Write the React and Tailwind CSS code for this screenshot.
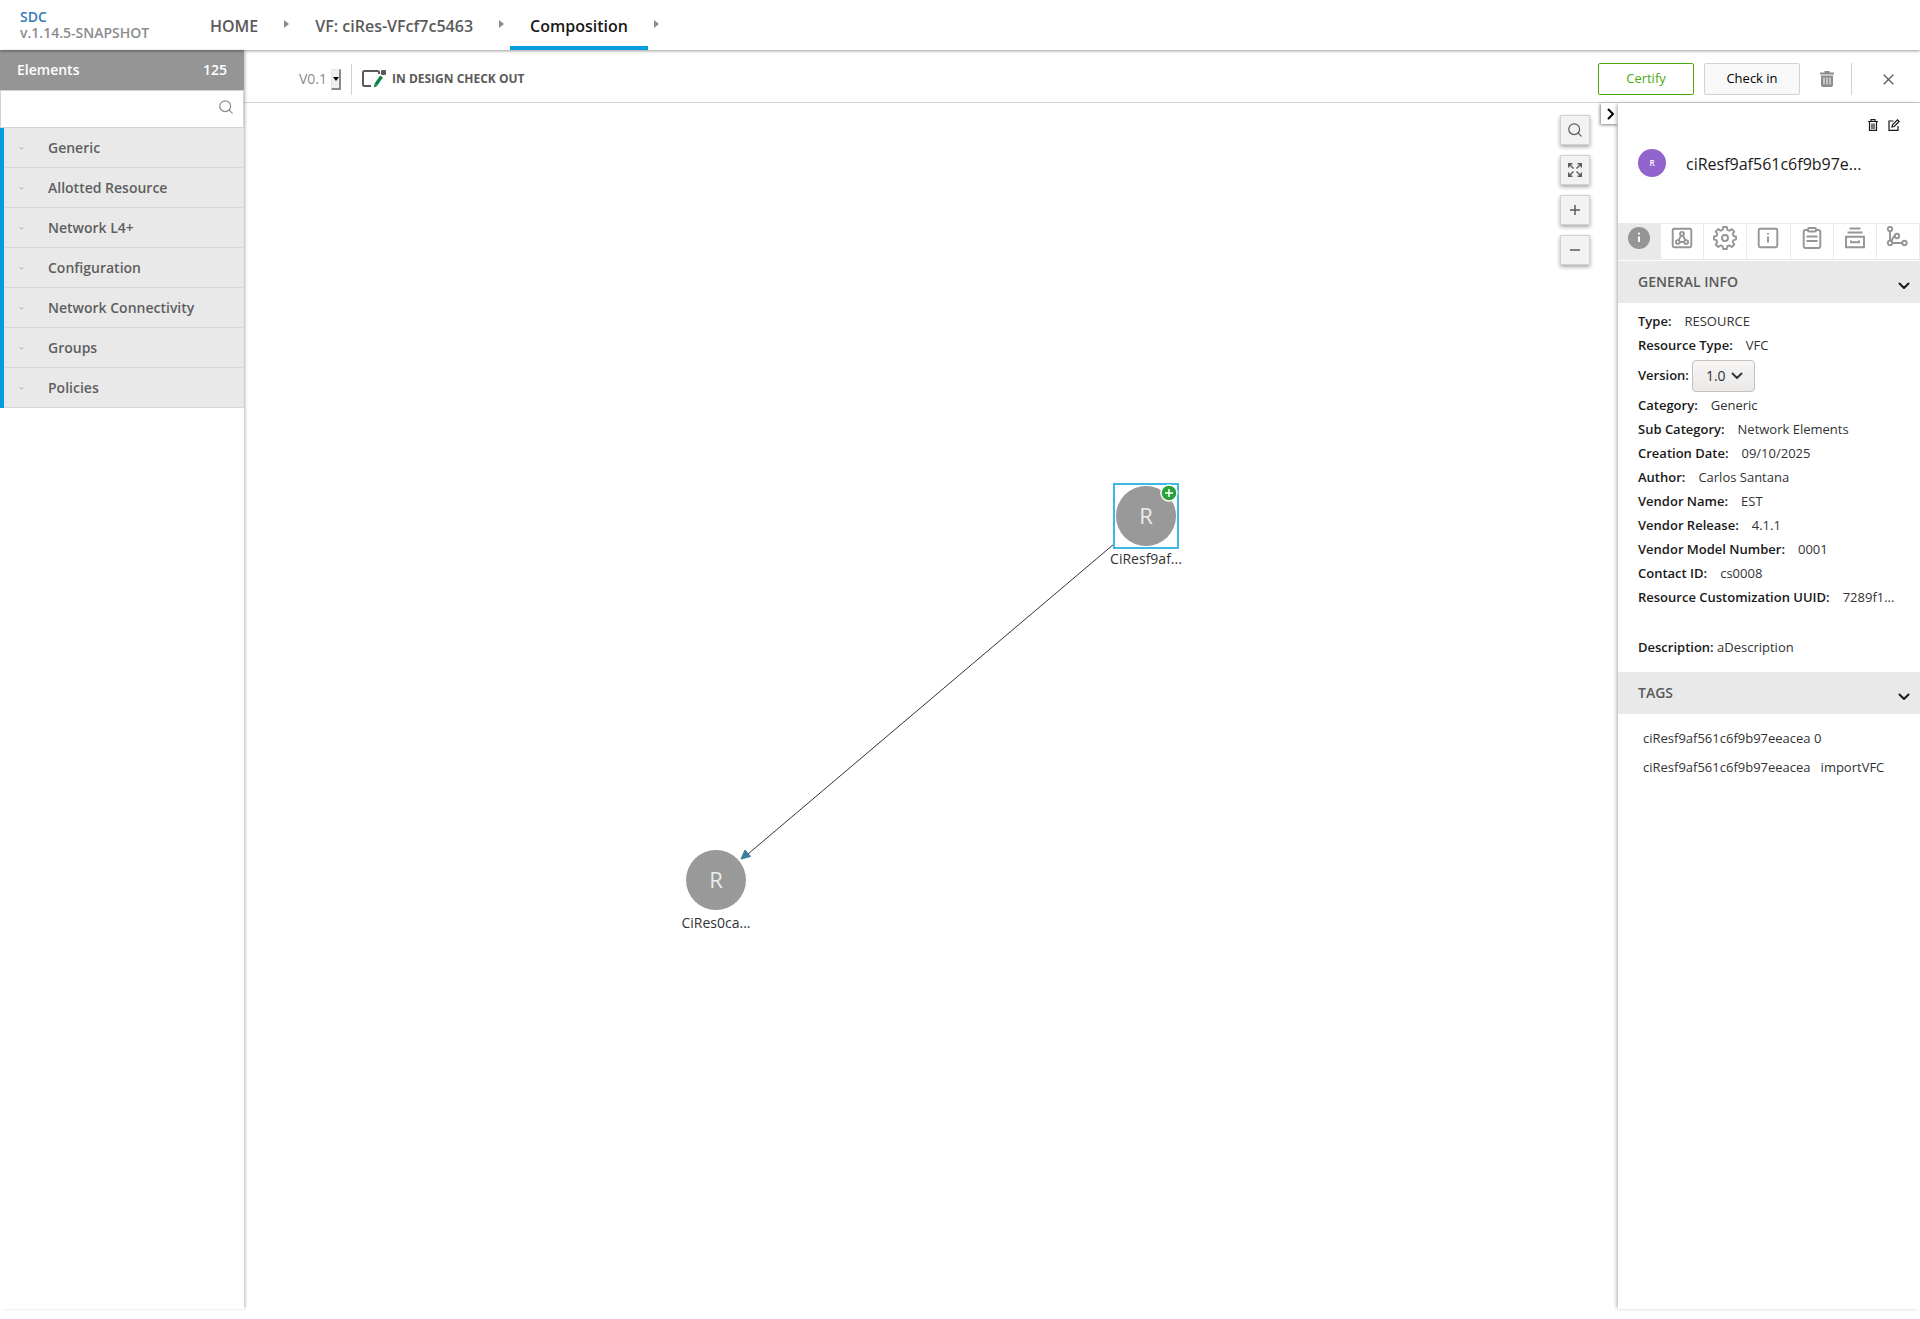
import React, { useState } from "react";

const categories = [
  "Generic",
  "Allotted Resource",
  "Network L4+",
  "Configuration",
  "Network Connectivity",
  "Groups",
  "Policies",
];

const details = [
  ["Category", "Generic"],
  ["Sub Category", "Network Elements"],
  ["Creation Date", "09/10/2025"],
  ["Author", "Carlos Santana"],
  ["Vendor Name", "EST"],
  ["Vendor Release", "4.1.1"],
  ["Vendor Model Number", "0001"],
  ["Contact ID", "cs0008"],
  ["Resource Customization UUID", "7289f1..."],
];

const SearchIcon = ({ className }) => (
  <svg viewBox="0 0 14 14" className={className} fill="none" stroke="currentColor" strokeWidth="1.2" strokeLinecap="round">
    <circle cx="6.2" cy="6.2" r="5.4" />
    <path d="M10.2 10.2l3 3" />
  </svg>
);

const Chevron = ({ className }) => (
  <svg viewBox="0 0 12 8" className={className} fill="none" stroke="currentColor" strokeWidth="2" strokeLinecap="round" strokeLinejoin="round">
    <path d="M1.5 1.5L6 6l4.500-4.500" />
  </svg>
);

const Crumb = ({ active, children }) => (
  <li className="flex h-full items-center">
    <a
      href="#"
      className={
        active
          ? "flex h-full items-center border-b-4 border-[#009fdb] px-5 pt-1.5 font-semibold text-[#191919]"
          : "flex h-full items-center border-b-4 border-transparent px-5 pt-1.5 font-semibold text-[#5a5a5a]"
      }
    >
      {children}
    </a>
    <svg viewBox="0 0 5 8" className="mx-1.5 mb-0.5 h-2 w-[5px] fill-[#8c8c8c]">
      <path d="M0 0l5 4-5 4z" />
    </svg>
  </li>
);

const tabs = [
  {
    name: "General information",
    icon: (
      <>
        <circle cx="12" cy="12" r="11" fill="currentColor" stroke="none" />
        <path d="M12 10.500v5.500" stroke="#fff" />
        <circle cx="12" cy="7.600" r="1.100" fill="#fff" stroke="none" />
      </>
    ),
  },
  {
    name: "Composition",
    icon: (
      <>
        <rect x="2.700" y="2.700" width="18.600" height="18.600" rx="1.500" />
        <circle cx="12" cy="7.800" r="1.900" />
        <circle cx="7.800" cy="16" r="1.900" />
        <circle cx="16.200" cy="16" r="1.900" />
        <path d="M11.100 9.500l-2.500 4.700M12.900 9.500l2.500 4.700M9.700 16h4.600" />
      </>
    ),
  },
  {
    name: "Properties",
    icon: (
      <>
        <circle cx="12" cy="12" r="3" />
        <path d="M10.2 1h3.600l.6 2.900 1.900.8 2.500-1.600 2.500 2.500-1.600 2.500.8 1.900 2.500.5v3.100l-2.500.5-.8 1.900 1.600 2.500-2.500 2.500-2.500-1.600-1.900.8-.6 2.800h-3.600l-.6-2.800-1.900-.8-2.500 1.600-2.500-2.500 1.600-2.500-.8-1.900-2.500-.5v-3.100l2.500-.5.8-1.900-1.600-2.500 2.500-2.500 2.500 1.600 1.900-.8z" strokeLinejoin="round" />
      </>
    ),
  },
  {
    name: "Information artifacts",
    icon: (
      <>
        <rect x="2.700" y="2.700" width="18.600" height="18.600" rx="1.500" />
        <path d="M12 10.500v6M12 7v1.600" />
      </>
    ),
  },
  {
    name: "Deployment artifacts",
    icon: (
      <>
        <path d="M8 4H5.500A1.800 1.800 0 0 0 3.700 5.800v14.400A1.800 1.800 0 0 0 5.500 22h13a1.800 1.800 0 0 0 1.800-1.800V5.800A1.800 1.800 0 0 0 18.500 4H16" />
        <rect x="8" y="2" width="8" height="3.500" rx="1" />
        <path d="M6.500 10.500h11M6.500 15h11" />
      </>
    ),
  },
  {
    name: "Requirements",
    icon: (
      <>
        <path d="M6.500 2.500h11M4.500 6.500h15M3 10.800h18v10.500H3zM8 14.500v1.700h8v-1.700" />
      </>
    ),
  },
  {
    name: "Inheritance",
    icon: (
      <>
        <circle cx="4" cy="3" r="2.200" />
        <circle cx="4" cy="17" r="2.200" />
        <circle cx="11" cy="10" r="2.200" />
        <circle cx="18.500" cy="17" r="2.200" />
        <path d="M4 5.200v9.600M6.200 17h10.100M5.500 15.300c1-3 2-5 3.400-5.300" />
      </>
    ),
  },
];

const SectionHeader = ({ title }) => (
  <button type="button" className="flex h-[42px] w-full items-center justify-between bg-[#e9e9e9] pl-5 pr-[10px] text-sm font-semibold text-[#5a5a5a]">
    {title}
    <Chevron className="mt-2 h-2 w-3 text-[#191919]" />
  </button>
);

const Row = ({ label, value }) => (
  <div className="flex h-6 items-center">
    <dt className="shrink-0 font-semibold">{label}:</dt>
    <dd className="ml-[13px] whitespace-nowrap text-[#323232]">{value}</dd>
  </div>
);

const canvasButton =
  "flex size-[30px] items-center justify-center border border-[#d2d2d2] bg-[#f2f2f2] text-[#5a5a5a] shadow-[0_2px_4px_rgba(0,0,0,0.35)]";

const Node = ({ className, label, selected }) => (
  <div className={`absolute flex w-20 flex-col items-center ${className}`}>
    <div
      className={
        selected
          ? "relative flex size-[66px] items-center justify-center border-2 border-[#3fb8e8]"
          : "relative flex size-[66px] items-center justify-center"
      }
    >
      <div className="flex size-[60px] items-center justify-center rounded-full bg-[#999999] pb-0.5 text-[22px] text-[#ececec]">R</div>
      {selected && (
        <svg viewBox="0 0 18 18" className="absolute -right-px -top-px size-[18px]">
          <circle cx="9" cy="9" r="8" fill="#2aa238" stroke="#fff" strokeWidth="1.500" />
          <path d="M9 5v8M5 9h8" stroke="#fff" strokeWidth="1.500" />
        </svg>
      )}
    </div>
    <span className="text-sm text-[#333333]">{label}</span>
  </div>
);

const App = () => {
  const [search, setSearch] = useState("");

  return (
    <div className="flex min-h-screen flex-col bg-white pb-[10px] font-['Open_Sans',sans-serif] text-[13px] text-[#191919]">
      {/* Top navigation */}
      <header className="relative z-20 flex h-[50px] shadow-[0_1px_3px_rgba(0,0,0,0.4)]">
        <div className="flex w-[190px] flex-col pl-5 pt-[9px] text-sm font-semibold leading-4">
          <a href="#" className="text-[#337ab7]">SDC</a>
          <span className="text-[#8c8c8c]">v.1.14.5-SNAPSHOT</span>
        </div>
        <nav className="text-base">
          <ul className="flex h-full">
            <Crumb>HOME</Crumb>
            <Crumb>VF: ciRes-VFcf7c5463</Crumb>
            <Crumb active>Composition</Crumb>
          </ul>
        </nav>
      </header>

      <div className="flex flex-1">
        {/* Elements palette */}
        <aside className="relative z-10 w-[244px] shrink-0 shadow-[2px_0_3px_-1px_rgba(0,0,0,0.3)]">
          <div className="flex h-10 items-center justify-between bg-[#959595] px-[17px] text-sm font-semibold text-white">
            <span>Elements</span>
            <span>125</span>
          </div>
          <div className="flex h-[38px] items-center border border-[#d2d2d2] pr-[10px]">
            <input
              aria-label="Search elements"
              value={search}
              onChange={(e) => setSearch(e.target.value)}
              className="h-full min-w-0 flex-1 px-3 outline-none"
            />
            <SearchIcon className="mb-1 size-[14px] text-[#8c8c8c]" />
          </div>
          {categories.map((name) => (
            <button
              key={name}
              type="button"
              className="flex h-10 w-full items-center border-l-4 border-[#009fdb] bg-[#e9e9e9] pl-[15px] text-sm font-semibold text-[#5f5f5f] shadow-[inset_0_-1px_1px_rgba(0,0,0,0.08)]"
            >
              <svg viewBox="0 0 5 3" className="mr-6 h-[3px] w-[5px]" fill="none" stroke="#999" strokeWidth="0.8">
                <path d="M.5.5l2 1.500 2-1.500" />
              </svg>
              {name}
            </button>
          ))}
        </aside>

        <div className="flex min-w-0 flex-1 flex-col">
          {/* Workspace toolbar */}
          <div className="flex h-[53px] shrink-0 items-center border-b border-[#d2d2d2] pl-[55px] pr-[26px] pt-1.5">
            <label htmlFor="version" className="text-sm text-[#8c8c8c]">V0.1</label>
            <div className="relative ml-1 h-[21px] w-[10px]">
              <select
                id="version"
                className="size-full appearance-none border border-b-2 border-r-2 border-[#e5e5e5] border-b-[#8a8a8a] border-r-[#8a8a8a] bg-[#efefef] text-transparent"
              >
                <option>V0.1</option>
              </select>
              <svg viewBox="0 0 6 4" className="pointer-events-none absolute left-0.5 top-2 h-1 w-1.5">
                <path d="M0 0h6L3 4z" />
              </svg>
            </div>
            <div className="ml-[10px] h-[31px] w-px bg-[#d2d2d2]" />
            <svg viewBox="0 0 25 18" className="ml-[10px] h-[18px] w-[25px]" fill="none">
              <path d="M17 4V2.500A1.500 1.500 0 0 0 15.500 1H2.500A1.500 1.500 0 0 0 1 2.500v12A1.500 1.500 0 0 0 2.500 16H9" stroke="#5a5a5a" strokeWidth="2" />
              <rect x="19" y="0" width="5" height="5" rx="1" fill="#5a5a5a" />
              <path d="M19.500 6.500L14 14.500" stroke="#0a8043" strokeWidth="3.200" />
              <path d="M12 17.500l.5-4 3 2.500z" fill="#0a8043" />
            </svg>
            <span className="ml-[5px] text-xs font-bold text-[#5a5a5a]">IN DESIGN CHECK OUT</span>

            <div className="ml-auto flex items-center text-[13px] font-medium">
              <button type="button" className="h-8 w-24 rounded-xs border border-[#4ca90c] text-[#4ca90c]">Certify</button>
              <button type="button" className="ml-[10px] h-8 w-24 rounded-xs border border-[#d2d2d2] bg-[#f8f8f8] text-black">Check in</button>
              <button type="button" aria-label="Delete" className="ml-5 text-[#8c8c8c]">
                <svg viewBox="0 0 14 16" className="h-4 w-[14px]" fill="currentColor">
                  <path d="M4.500 0h5v1.500H14v2H0v-2h4.500z" />
                  <path d="M1 4.500h12V14a2 2 0 0 1-2 2H3a2 2 0 0 1-2-2z" />
                  <path d="M4 6.500v7M7 6.500v7M10 6.500v7" stroke="#fff" />
                </svg>
              </button>
              <div className="ml-[17px] h-8 w-px bg-[#d2d2d2]" />
              <button type="button" aria-label="Close" className="ml-[31px] text-[#5a5a5a]">
                <svg viewBox="0 0 11 11" className="size-[11px]" stroke="currentColor" strokeWidth="1.300">
                  <path d="M.7.7l9.600 9.600M10.300.7L.7 10.300" />
                </svg>
              </button>
            </div>
          </div>

          <div className="flex flex-1">
            {/* Composition canvas */}
            <main className="relative min-w-0 flex-1">
              <svg className="absolute left-0 top-0 h-full w-full">
                <path d="M870 441L504 751" stroke="#333" strokeWidth="1" />
                <path d="M497 756l4-9 5.500 6.500z" fill="#3a7d9f" stroke="#3a7d9f" />
              </svg>
              <Node className="left-[862px] top-[380px]" label="CiResf9af..." selected />
              <Node className="left-[432px] top-[744px]" label="CiRes0ca..." />

              <div className="absolute right-7 top-3 flex flex-col gap-[10px]">
                <button type="button" aria-label="Search" className={canvasButton}>
                  <SearchIcon className="size-[14px]" />
                </button>
                <button type="button" aria-label="Fit to screen" className={canvasButton}>
                  <svg viewBox="0 0 14 14" className="size-[14px]" fill="none" stroke="currentColor" strokeWidth="1.400">
                    <path d="M.7 4.500V.7h3.800M9.500.7h3.800v3.800M13.300 9.500v3.800H9.500M4.500 13.300H.7V9.500M1 1l4.500 4.500M13 1L8.500 5.500M13 13L8.500 8.500M1 13l4.500-4.500" />
                  </svg>
                </button>
                <button type="button" aria-label="Zoom in" className={canvasButton}>
                  <svg viewBox="0 0 10 10" className="size-[10px]" stroke="currentColor" strokeWidth="1.500">
                    <path d="M5 0v10M0 5h10" />
                  </svg>
                </button>
                <button type="button" aria-label="Zoom out" className={canvasButton}>
                  <svg viewBox="0 0 10 10" className="size-[10px]" stroke="currentColor" strokeWidth="1.500">
                    <path d="M0 5h10" />
                  </svg>
                </button>
              </div>

              <button
                type="button"
                aria-label="Toggle details"
                className="absolute right-0 top-0 flex h-[21px] w-[17px] items-center justify-center bg-white pl-0.5 shadow-[-1px_1px_3px_rgba(0,0,0,0.5)]"
              >
                <Chevron className="h-2 w-3 -rotate-90 text-black" />
              </button>
            </main>

            {/* Details panel */}
            <aside className="relative w-[302px] shrink-0 bg-white shadow-[-2px_0_4px_-1px_rgba(0,0,0,0.35)]">
              <div className="flex h-[46px] items-start justify-end gap-[10px] pr-5 pt-4">
                <button type="button" aria-label="Delete instance">
                  <svg viewBox="0 0 10 12" className="h-3 w-[10px]" fill="none" stroke="#191919" strokeWidth="1.200">
                    <path d="M0 2.500h10M3 2.500V.6h4v1.900M1.500 2.500v8.900h7V2.500" />
                    <path d="M3.500 5h3v4.500h-3z" fill="#777" stroke="#777" />
                  </svg>
                </button>
                <button type="button" aria-label="Edit instance">
                  <svg viewBox="0 0 12 12" className="size-3" fill="none" stroke="#191919" strokeWidth="1.200">
                    <path d="M5.500 2H1v9.400h9V7" />
                    <path d="M4 8l.5-2.200L9.500.8l1.700 1.700-5 5z" />
                  </svg>
                </button>
              </div>
              <div className="flex h-[74px] items-start pl-5">
                <div className="flex size-7 items-center justify-center rounded-full bg-[#9063cd] text-[8px] font-semibold text-white">R</div>
                <h1 className="ml-5 whitespace-nowrap pt-[3px] text-base">ciResf9af561c6f9b97e...</h1>
              </div>

              <div role="tablist" className="grid h-[38px] grid-cols-7 border-t border-[#e9e9e9]">
                {tabs.map((tab, i) => (
                  <button
                    key={tab.name}
                    type="button"
                    role="tab"
                    aria-label={tab.name}
                    aria-selected={i === 0}
                    className={
                      i === 0
                        ? "flex h-9 justify-center border-b border-r border-[#e9e9e9] bg-[#e9e9e9] pt-0.5 text-[#959595]"
                        : "flex h-9 justify-center border-b border-r border-[#e9e9e9] pt-0.5 text-[#959595]"
                    }
                  >
                    <svg viewBox="0 0 24 24" className="size-6" fill="none" stroke="currentColor" strokeWidth="1.900">
                      {tab.icon}
                    </svg>
                  </button>
                ))}
              </div>

              <SectionHeader title="GENERAL INFO" />
              <dl className="px-5 pt-[7px]">
                <Row label="Type" value="RESOURCE" />
                <Row label="Resource Type" value="VFC" />
                <div className="flex h-9 items-center">
                  <dt className="font-semibold">
                    <label htmlFor="instance-version">Version:</label>
                  </dt>
                  <dd className="relative ml-[3px]">
                    <select
                      id="instance-version"
                      className="h-8 w-[63px] appearance-none rounded border border-[#c4c1bc] bg-linear-to-b from-[#f6f5f4] to-[#eae9e8] pl-[13px] text-sm text-[#323232]"
                    >
                      <option>1.0</option>
                    </select>
                    <Chevron className="pointer-events-none absolute right-3 top-3 h-2 w-3 text-[#323a3d]" />
                  </dd>
                </div>
                {details.map(([label, value]) => (
                  <Row key={label} label={label} value={value} />
                ))}
              </dl>
              <p className="px-5 pb-[15px] pt-7 leading-[19px]">
                <span className="font-semibold">Description:</span> <span className="text-[#323232]">aDescription</span>
              </p>

              <SectionHeader title="TAGS" />
              <ul className="flex flex-wrap gap-x-[10px] px-[25px] pt-[10px] leading-[29px] text-[#323232]">
                <li>ciResf9af561c6f9b97eeacea 0</li>
                <li>ciResf9af561c6f9b97eeacea</li>
                <li>importVFC</li>
              </ul>
            </aside>
          </div>
        </div>
      </div>
    </div>
  );
};

export default App;
